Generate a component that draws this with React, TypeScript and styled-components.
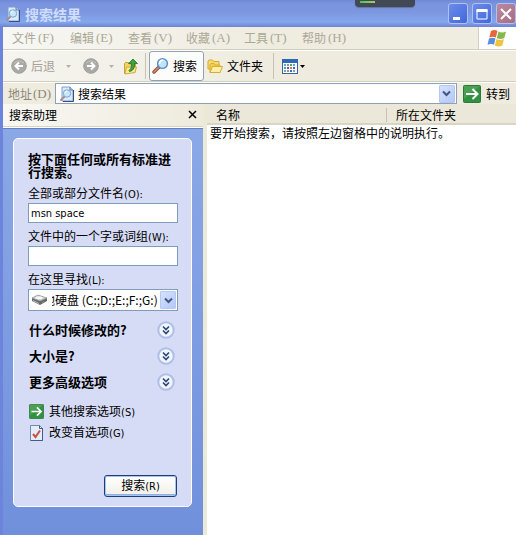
import React from "react";
import styled, { createGlobalStyle, css } from "styled-components";

const cjk = `"Noto Sans CJK SC", sans-serif`;

const GlobalStyle = createGlobalStyle`
  *, *::before, *::after { box-sizing: border-box; }
  body { margin: 0; background: #fff; }
  button, input, select { font: inherit; color: inherit; }
  svg { display: block; flex: none; }
`;

const Window = styled.div`
  display: flex;
  flex-direction: column;
  min-height: 100vh;
  font: 12px/14px ${cjk};
  color: #000;
  background: #ece9d8;
  white-space: nowrap;
`;

const TitleBar = styled.header`
  display: flex;
  align-items: center;
  height: 27px;
  padding: 0 0 0 5px;
  gap: 4px;
  background: linear-gradient(#7088d8 0, #7b94de 4px, #7c96e0 12px, #83a8ec 22px, #7d98e4 24px, #6f83cf 27px);
`;

const Title = styled.h1`
  flex: 1;
  margin: 0;
  font-size: 14px;
  line-height: 20px;
  font-weight: 700;
  color: #d0ddfb;
`;

const Caption = styled.div`
  display: flex;
  gap: 4px;
`;

const CaptionButton = styled.button<{ $close?: boolean }>`
  display: grid;
  place-items: center;
  width: 20px;
  height: 21px;
  padding: 0;
  border: 1px solid #b0c2f4;
  border-radius: 3px;
  background: ${(p) =>
    p.$close
      ? "linear-gradient(135deg, #b98a9f, #a96d80)"
      : "linear-gradient(135deg, #6d8ce8, #4169dc)"};
`;

const Notch = styled.div`
  position: absolute;
  top: 0;
  right: 101px;
  width: 60px;
  height: 7px;
  padding: 1px 5px;
  border-radius: 0 0 4px 4px;
  background: #414955;
  box-shadow: 0 1px 1px #65749f;
`;

const NotchBar = styled.div`
  width: 15px;
  height: 2px;
  background: linear-gradient(90deg, #3fca55, #b6c36a);
`;

const Frame = styled.div`
  display: flex;
  flex-direction: column;
  flex: 1;
  border-left: 3px solid #6e84dc;
`;

const MenuBar = styled.nav`
  display: flex;
  height: 24px;
  border-bottom: 1px solid #fff;
  background: linear-gradient(90deg, #f7f7f4, #efece0 50%);
`;

const Menus = styled.div`
  display: flex;
  flex: 1;
  gap: 16px;
  padding-left: 9px;
  border-bottom: 1px solid #d3cfbd;
`;

const MenuItem = styled.button`
  display: flex;
  align-items: center;
  gap: 2px;
  width: 42px;
  padding: 0;
  border: 0;
  background: none;
  color: #aba897;
  white-space: nowrap;
`;

const Serif = styled.span`
  font: 13px/14px "Liberation Serif", serif;
`;

const Latin = styled.span`
  font: 11px/14px "DejaVu Sans Condensed", "DejaVu Sans", sans-serif;
`;

const Flag = styled.div`
  display: grid;
  place-items: center;
  width: 38px;
  border-left: 1px solid #d3cfbd;
  border-bottom: 1px solid #d3cfbd;
  background: #fff;
`;

const Toolbar = styled.div`
  display: flex;
  align-items: center;
  height: 31px;
  padding-left: 8px;
  border-bottom: 1px solid #d3cfbd;
  background: linear-gradient(90deg, #f5f4ef, #efecdf 50%);
`;

const ToolButton = styled.button<{ $active?: boolean; $muted?: boolean; $gap?: number }>`
  display: flex;
  align-items: center;
  gap: ${(p) => p.$gap ?? 4}px;
  height: 30px;
  padding: 0;
  border: 0;
  background: none;
  color: ${(p) => (p.$muted ? "#a5a296" : "#000")};
  ${(p) =>
    p.$active &&
    css`
      padding: 0 6px 0 2px;
      border: 1px solid #91a2b3;
      border-radius: 3px;
      background: #fcfcfa;
    `}
`;

const Gap = styled.span<{ $w: number }>`
  flex: none;
  width: ${(p) => p.$w}px;
`;

const Rule = styled.span<{ $h: number }>`
  flex: none;
  width: 1px;
  height: ${(p) => p.$h}px;
  background: #c6c3b3;
`;

const AddressBar = styled.form`
  display: flex;
  align-items: center;
  height: 22px;
  padding-left: 5px;
  padding-right: 6px;
  border-top: 1px solid #fff;
  background: #efecdf;
`;

const AddressLabel = styled.label`
  display: flex;
  align-items: center;
  gap: 1px;
  width: 47px;
  color: #8a877b;
`;

const AddressBox = styled.div`
  display: flex;
  align-items: center;
  flex: 1;
  min-width: 0;
  height: 21px;
  padding-left: 3px;
  border: 1px solid #8ca2b4;
  background: #fff;
`;

const AddressInput = styled.input`
  flex: 1;
  min-width: 0;
  height: 18px;
  padding: 0 0 0 3px;
  border: 0;
  outline: 0;
  background: none;
`;

const DropButton = styled.button`
  display: grid;
  place-items: center;
  flex: none;
  width: 16px;
  height: 18px;
  margin-right: 1px;
  padding: 0;
  border: 1px solid #b5c8f5;
  border-radius: 1px;
  background: linear-gradient(135deg, #d6e2fd, #b3c8f7);
`;

const GoButton = styled.button`
  display: flex;
  align-items: center;
  gap: 5px;
  margin-left: 6px;
  padding: 0;
  border: 0;
  background: none;
`;

const Panes = styled.main`
  display: grid;
  grid-template-columns: 200px 4px minmax(0, 1fr);
  flex: 1;
`;

const Sidebar = styled.aside`
  display: flex;
  flex-direction: column;
`;

const SidebarHead = styled.div`
  display: flex;
  align-items: center;
  justify-content: space-between;
  height: 24px;
  padding: 0 6px 2px 6px;
  background: linear-gradient(90deg, #f8f7f3, #eeebdd);
  border-bottom: 1px solid #fff;
  box-shadow: inset 0 -1px #d8d4c3;
`;

const SidebarTitle = styled.h2`
  margin: 0;
  font-size: 12px;
  font-weight: 400;
`;

const CloseButton = styled.button`
  padding: 0;
  border: 0;
  background: none;
`;

const SidebarBody = styled.div`
  flex: 1;
  padding: 9px 11px 28px 10px;
  border-top: 1px solid #6481bd;
  background: linear-gradient(#8ba8e6, #7090dc);
`;

const Card = styled.form`
  display: flex;
  flex-direction: column;
  height: 369px;
  padding: 13px 13px 9px 14px;
  border: 1px solid #fbfdff;
  border-radius: 5px;
  background: #d6dcf6;
`;

const Question = styled.h3`
  margin: 0 0 8px;
  font-size: 13px;
  line-height: 13px;
  font-weight: 700;
  white-space: normal;
`;

const Field = styled.div`
  display: flex;
  flex-direction: column;
  gap: 1px;
  margin-bottom: 6px;
`;

const TextInput = styled.input`
  width: 100%;
  height: 20px;
  padding: 0 2px;
  border: 1px solid #7f9db9;
  outline: 0;
  background: #fff;
  font: 11px/14px "DejaVu Sans Condensed", "DejaVu Sans", sans-serif;
`;

const SelectBox = styled.div`
  display: flex;
  align-items: center;
  height: 22px;
  padding-left: 2px;
  border: 1px solid #7f9db9;
  background: #fff;
`;

const DriveSelect = styled.select`
  flex: 1;
  min-width: 0;
  height: 18px;
  margin-left: 4px;
  padding: 0;
  border: 0;
  outline: 0;
  appearance: none;
  overflow: hidden;
  background: none;
  text-indent: -21px;
  text-overflow: clip;
  font: 12px/18px ${cjk};
`;

const Expanders = styled.div`
  display: flex;
  flex-direction: column;
  margin-bottom: 6px;
`;

const Expander = styled.button`
  display: flex;
  align-items: center;
  justify-content: space-between;
  height: 26px;
  padding: 0 3px 0 1px;
  border: 0;
  background: none;
  font-size: 13px;
  font-weight: 700;
`;

const Option = styled.a`
  display: flex;
  align-items: center;
  gap: 5px;
  height: 21px;
  padding-left: 1px;
  color: #000;
  text-decoration: none;
`;

const SearchButton = styled.button`
  align-self: flex-end;
  width: 73px;
  height: 22px;
  margin: auto 1px 0 0;
  padding: 0;
  border: 1px solid #1d3f78;
  border-radius: 3px;
  background: linear-gradient(#fff, #f0efe8);
  box-shadow: inset 0 0 0 1px #a9c2ee, inset 0 -2px #8fb0e4;
`;

const Results = styled.section`
  background: #fff;
`;

const ResultTable = styled.table`
  width: 100%;
  border-collapse: collapse;
  table-layout: fixed;
`;

const HeadCell = styled.th<{ $w?: number }>`
  width: ${(p) => (p.$w ? `${p.$w}px` : "auto")};
  height: 21px;
  padding: 0 0 0 9px;
  font-weight: 400;
  text-align: left;
  line-height: 18px;
  background: linear-gradient(90deg, #c5c2b2, #c5c2b2) right center / ${(p) => (p.$w ? 1 : 0)}px 14px no-repeat #ebe8da;
  box-shadow: inset 0 -2px #d9d5c4;
`;

const Message = styled.td`
  padding: 0 0 0 3px;
  line-height: 15px;
`;

function PageIcon({ size }: { size: number }) {
  return (
    <svg width={size} height={size} viewBox="0 0 16 16" aria-hidden="true">
      <path d="M3 1h8l3 3v11H3z" fill="#dbe9fa" stroke="#7f9fcb" />
      <path d="M11 1v3h3" fill="#b9d0ec" stroke="#5a7cad" />
      <path d="M14.500 4v11.500H4" fill="none" stroke="#354e85" />
      <path d="M5.500 10.500L2 14" stroke="#a98b94" strokeWidth="2" strokeLinecap="round" />
      <circle cx="8" cy="7.500" r="3.700" fill="#c8e8fa" stroke="#79a5cf" />
      <path d="M6 7q.5-2 2-2" fill="none" stroke="#fff" />
    </svg>
  );
}

function Magnifier() {
  return (
    <svg width="17" height="18" viewBox="0 0 17 18" aria-hidden="true">
      <path d="M7 10l-5 5" stroke="#8f4c34" strokeWidth="3.400" strokeLinecap="round" />
      <path d="M7 10l-5 5" stroke="#d18b66" strokeWidth="1.600" strokeLinecap="round" />
      <circle cx="10.500" cy="6.500" r="4.900" fill="#bfe5fb" stroke="#5b8cc4" strokeWidth="1.400" />
      <path d="M7.500 7q0-3.500 3.500-3.700" fill="none" stroke="#fff" strokeWidth="1.400" />
    </svg>
  );
}

function RoundArrow({ forward }: { forward?: boolean }) {
  return (
    <svg width="16" height="16" viewBox="0 0 16 16" aria-hidden="true">
      <circle cx="8" cy="8" r="7.300" fill="#a9a9a5" stroke="#a09f9a" />
      <path d="M3 5q5-4 10 0" stroke="#c2c2be" fill="none" />
      <path
        d={forward ? "M4 8h7M8 4.500L11.500 8 8 11.500" : "M12 8H5M8 4.500L4.500 8 8 11.500"}
        fill="none"
        stroke="#fff"
        strokeWidth="2"
      />
    </svg>
  );
}

function Triangle({ color }: { color: string }) {
  return (
    <svg width="5" height="3" viewBox="0 0 5 3" aria-hidden="true">
      <path d="M0 0h5L2.500 3z" fill={color} />
    </svg>
  );
}

function FolderUp() {
  return (
    <svg width="14" height="17" viewBox="0 0 14 17" aria-hidden="true">
      <path d="M.5 15.500V5.500l1-1h3l1 1.500h6v8z" fill="#f2d35c" stroke="#c4a23c" />
      <path d="M1 16L2.500 9h10l-1.500 5.500z" fill="#fbea91" stroke="#cdae46" />
      <path d="M5 12.500Q8 11 7.500 5.500H4.500L9 1l4.500 4.500h-3q.5 7-5 8z" fill="#3ea43a" stroke="#236f29" strokeWidth=".8" />
    </svg>
  );
}

function Folders() {
  return (
    <svg width="16" height="15" viewBox="0 0 16 15" aria-hidden="true">
      <path d="M1 10V2l1-1h3.500l1 1.500H12v7z" fill="#f9db6b" stroke="#d7ab35" />
      <path d="M3 13.500V5.500L4 4.500h3L8 6h5v7.500z" fill="#f5ce58" stroke="#d7ab35" />
      <path d="M3 13.500L5.500 7.500h10l-2.500 6z" fill="#fff1a3" stroke="#d7ab35" />
    </svg>
  );
}

function ViewsIcon() {
  const dots = [
    [3, 6, "#6a9bd5"], [6, 6, "#9a8b8b"], [9, 6, "#51a564"], [12, 6, "#6a9bd5"],
    [3, 9, "#51a564"], [6, 9, "#3d69bd"], [9, 9, "#cc7c58"], [12, 9, "#3d69bd"],
    [3, 12, "#8299b7"], [6, 12, "#cc7c58"], [9, 12, "#3d69bd"], [12, 12, "#8299b7"],
  ] as const;
  return (
    <svg width="16" height="15" viewBox="0 0 16 15" aria-hidden="true">
      <rect x=".5" y=".5" width="15" height="14" fill="#f8fbff" stroke="#3268a8" />
      <path d="M0 0h16v4H0z" fill="#2d6ab6" />
      {dots.map(([x, y, c]) => (
        <rect key={`${x}-${y}`} x={x - 1} y={y - 1} width="2" height="2" fill={c} />
      ))}
    </svg>
  );
}

function GreenArrow({ size }: { size: number }) {
  return (
    <svg width={size} height={size} viewBox="0 0 18 18" aria-hidden="true">
      <rect x=".5" y=".5" width="17" height="17" rx="1" fill="#329041" stroke="#2c7a37" />
      <path d="M1 1h16L1 14z" fill="#62b065" opacity=".5" />
      <path d="M3 9h11M9.500 4l5 5-5 5" fill="none" stroke="#fff" strokeWidth="2" />
    </svg>
  );
}

function Chevron() {
  return (
    <svg width="9" height="7" viewBox="0 0 9 7" aria-hidden="true">
      <path d="M1 1.500l3.500 3.500L8 1.500" fill="none" stroke="#3f5782" strokeWidth="2" />
    </svg>
  );
}

function WindowsFlag() {
  return (
    <svg width="21" height="19" viewBox="0 0 21 19" aria-hidden="true">
      <path d="M4 2q3.500-2 6.500 0L8.800 8.500q-3-1.700-6.500 0z" fill="#e5673c" />
      <path d="M11.500 2.500q3.500 1.800 7.500 0L17.300 9q-4 1.800-7.500 0z" fill="#83b84b" />
      <path d="M2 9.500q3.500-1.700 6.500 0L7 15.800q-3-1.800-6.500 0z" fill="#5a8dda" />
      <path d="M9.500 10q3.500 1.900 7.500 0l-1.700 6.400q-4 2-7.500 0z" fill="#f0c440" />
    </svg>
  );
}

function DriveIcon() {
  return (
    <svg width="17" height="12" viewBox="0 0 17 12" aria-hidden="true">
      <path d="M1 4l6-3 9 3v3l-7 4-8-4z" fill="#66686a" />
      <path d="M1 4l6-3 9 3-7 3z" fill="#d3d4d4" stroke="#929496" strokeWidth=".6" />
      <path d="M2 6l6 3v1L2 7z" fill="#bfc1c3" />
      <ellipse cx="8" cy="3.800" rx="3.500" ry="1.300" fill="#f7f7f7" />
      <path d="M11 8.500l2-1" stroke="#58ad57" />
    </svg>
  );
}

function DoubleChevron() {
  return (
    <svg width="18" height="18" viewBox="0 0 18 18" aria-hidden="true">
      <circle cx="9" cy="9" r="7.700" fill="#f1f5fd" stroke="#afbfe5" strokeWidth="2" />
      <path d="M6 5.500l3 3 3-3M6 9.500l3 3 3-3" fill="none" stroke="#294675" strokeWidth="1.600" />
    </svg>
  );
}

function CheckPage() {
  return (
    <svg width="15" height="16" viewBox="0 0 15 16" aria-hidden="true">
      <path d="M1.500.5h9l3 3v12h-12z" fill="#e4edf9" stroke="#7389b0" />
      <path d="M10.500.5v3h3v12h-12" fill="none" stroke="#445b8b" />
      <path d="M4 9l2.500 3L11 5.500" fill="none" stroke="#c65346" strokeWidth="2" />
    </svg>
  );
}

const menus = [
  ["文件", "F"],
  ["编辑", "E"],
  ["查看", "V"],
  ["收藏", "A"],
  ["工具", "T"],
  ["帮助", "H"],
];

export default function App() {
  return (
    <Window>
      <GlobalStyle />
      <TitleBar>
        <PageIcon size={16} />
        <Title>搜索结果</Title>
        <Notch>
          <NotchBar />
        </Notch>
        <Caption>
          <CaptionButton aria-label="最小化">
            <svg width="14" height="14" viewBox="0 0 14 14"><path d="M2 10h7v3H2z" fill="#fff" /></svg>
          </CaptionButton>
          <CaptionButton aria-label="最大化">
            <svg width="14" height="14" viewBox="0 0 14 14">
              <path d="M2 3h10v9H2z" fill="none" stroke="#fff" />
              <path d="M1.500 2h11v3h-11z" fill="#fff" />
            </svg>
          </CaptionButton>
          <CaptionButton $close aria-label="关闭">
            <svg width="14" height="14" viewBox="0 0 14 14"><path d="M2 2l10 10M12 2L2 12" stroke="#fff" strokeWidth="2" /></svg>
          </CaptionButton>
        </Caption>
      </TitleBar>

      <Frame>
        <MenuBar>
          <Menus>
            {menus.map(([name, key]) => (
              <MenuItem key={key}>
                {name}
                <Serif>({key})</Serif>
              </MenuItem>
            ))}
          </Menus>
          <Flag>
            <WindowsFlag />
          </Flag>
        </MenuBar>

        <Toolbar>
          <ToolButton $muted>
            <RoundArrow />
            后退
          </ToolButton>
          <Gap $w={11} />
          <Triangle color="#b5b2a5" />
          <Gap $w={12} />
          <ToolButton aria-label="前进">
            <RoundArrow forward />
          </ToolButton>
          <Gap $w={10} />
          <Triangle color="#b5b2a5" />
          <Gap $w={10} />
          <ToolButton aria-label="向上">
            <FolderUp />
          </ToolButton>
          <Gap $w={7} />
          <Rule $h={26} />
          <Gap $w={3} />
          <ToolButton $active>
            <Magnifier />
            搜索
          </ToolButton>
          <Gap $w={3} />
          <ToolButton>
            <Folders />
            文件夹
          </ToolButton>
          <Gap $w={10} />
          <Rule $h={26} />
          <Gap $w={8} />
          <ToolButton $gap={2} aria-label="查看方式">
            <ViewsIcon />
            <Triangle color="#000" />
          </ToolButton>
        </Toolbar>

        <AddressBar>
          <AddressLabel htmlFor="address">
            地址<Serif>(D)</Serif>
          </AddressLabel>
          <AddressBox>
            <PageIcon size={16} />
            <AddressInput id="address" defaultValue="搜索结果" />
            <DropButton type="button" aria-label="地址列表">
              <Chevron />
            </DropButton>
          </AddressBox>
          <GoButton type="button">
            <GreenArrow size={18} />
            转到
          </GoButton>
        </AddressBar>

        <Panes>
          <Sidebar>
            <SidebarHead>
              <SidebarTitle>搜索助理</SidebarTitle>
              <CloseButton aria-label="关闭搜索助理">
                <svg width="9" height="9" viewBox="0 0 9 9">
                  <path d="M1 1l7 7M8 1L1 8" stroke="#000" strokeWidth="1.500" />
                </svg>
              </CloseButton>
            </SidebarHead>
            <SidebarBody>
              <Card>
                <Question>按下面任何或所有标准进行搜索。</Question>
                <Field>
                  <label htmlFor="name">
                    全部或部分文件名<Latin>(O):</Latin>
                  </label>
                  <TextInput id="name" defaultValue="msn space" />
                </Field>
                <Field>
                  <label htmlFor="phrase">
                    文件中的一个字或词组<Latin>(W):</Latin>
                  </label>
                  <TextInput id="phrase" />
                </Field>
                <Field>
                  <label htmlFor="place">
                    在这里寻找<Latin>(L):</Latin>
                  </label>
                  <SelectBox>
                    <DriveIcon />
                    <DriveSelect id="place">
                      <option>本地硬盘 (C:;D:;E:;F:;G:)</option>
                    </DriveSelect>
                    <DropButton type="button" aria-label="位置列表">
                      <Chevron />
                    </DropButton>
                  </SelectBox>
                </Field>
                <Expanders>
                  {["什么时候修改的?", "大小是?", "更多高级选项"].map((text) => (
                    <Expander key={text} type="button">
                      {text}
                      <DoubleChevron />
                    </Expander>
                  ))}
                </Expanders>
                <Option href="#other">
                  <GreenArrow size={15} />
                  <span>
                    其他搜索选项<Latin>(S)</Latin>
                  </span>
                </Option>
                <Option href="#preferences">
                  <CheckPage />
                  <span>
                    改变首选项<Latin>(G)</Latin>
                  </span>
                </Option>
                <SearchButton type="button">
                  搜索<Latin>(R)</Latin>
                </SearchButton>
              </Card>
            </SidebarBody>
          </Sidebar>
          <span />
          <Results>
            <ResultTable>
              <thead>
                <tr>
                  <HeadCell $w={180}>名称</HeadCell>
                  <HeadCell>所在文件夹</HeadCell>
                </tr>
              </thead>
              <tbody>
                <tr>
                  <Message colSpan={2}>要开始搜索，请按照左边窗格中的说明执行。</Message>
                </tr>
              </tbody>
            </ResultTable>
          </Results>
        </Panes>
      </Frame>
    </Window>
  );
}
